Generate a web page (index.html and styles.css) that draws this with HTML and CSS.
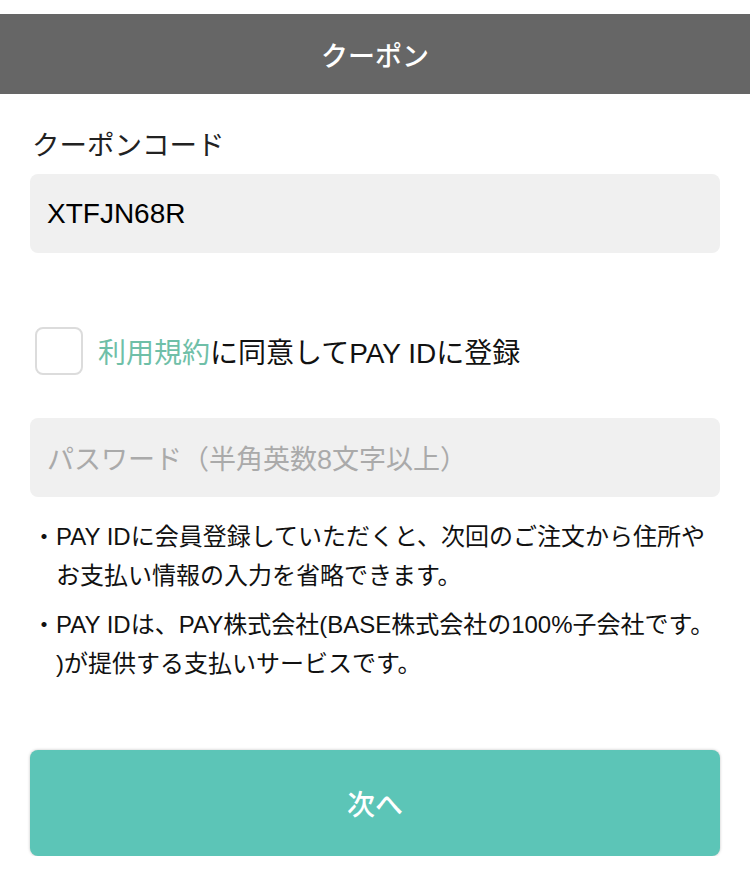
FILE: index.html
```html
<!DOCTYPE html>
<html lang="ja">
<head>
<meta charset="utf-8">
<title>クーポン</title>
<link rel="stylesheet" href="styles.css">
</head>
<body>
<div class="page">
  <header class="header"><h1 class="title">クーポン</h1></header>
  <main class="content">
    <label class="label">クーポンコード</label>
    <div class="field"><span class="value">XTFJN68R</span></div>
    <div class="agree">
      <span class="checkbox"></span>
      <span class="agree-text"><span class="link">利用規約</span>に同意してPAY IDに登録</span>
    </div>
    <div class="field"><span class="placeholder">パスワード（半角英数8文字以上）</span></div>
    <ul class="notes">
      <li class="note">PAY IDに会員登録していただくと、次回のご注文から住所やお支払い情報の入力を省略できます。</li>
      <li class="note">PAY IDは、PAY株式会社(BASE株式会社の100%子会社です。<br>)が提供する支払いサービスです。</li>
    </ul>
    <button class="next">次へ</button>
  </main>
</div>
</body>
</html>
```
FILE: styles.css
```css
html, body {
  margin: 0;
  padding: 0;
  background: #fff;
}
body {
  font-family: "Liberation Sans", "Noto Sans CJK JP", sans-serif;
  color: #111;
}
.page {
  padding-top: 14px;
}
.header {
  height: 80px;
  background: #666666;
  display: flex;
  align-items: center;
  justify-content: center;
}
.title {
  margin: 0;
  color: #fff;
  font-size: 27px;
  font-weight: 500;
}
.content {
  padding: 0 30px;
  display: flex;
  flex-direction: column;
}
.label {
  display: block;
  margin-top: 33px;
  margin-left: 2px;
  font-size: 27.5px;
  line-height: 38px;
  color: #222;
  margin-bottom: 9px;
}
.field {
  height: 79px;
  background: #f0f0f0;
  border-radius: 8px;
  display: flex;
  align-items: center;
  padding-left: 17px;
}
.value {
  font-size: 28px;
  color: #000;
}
.placeholder {
  font-size: 27px;
  color: #aaa;
}
.agree {
  display: flex;
  align-items: center;
  gap: 15px;
  margin: 74px 0 43px 5px;
}
.checkbox {
  width: 48px;
  height: 48px;
  box-sizing: border-box;
  border: 2px solid #dcdcdc;
  border-radius: 8px;
  flex: none;
}
.agree-text {
  font-size: 28px;
  color: #111;
}
.link {
  color: #6fbfa8;
}
.notes {
  list-style: none;
  margin: 20px 0 0 2px;
  padding: 0;
}
.note {
  font-size: 24px;
  line-height: 39px;
  padding-left: 24px;
  text-indent: -24px;
  margin-bottom: 10px;
}
.note::before {
  content: "・";
}
.next {
  margin-top: 57px;
  height: 106px;
  border: none;
  border-radius: 8px;
  background: #5cc5b7;
  box-shadow: 0 0 3px rgba(0,0,0,0.25);
  color: #fff;
  font-family: "Liberation Sans", "Noto Sans CJK JP", sans-serif;
  font-size: 28px;
  font-weight: 500;
}
```
